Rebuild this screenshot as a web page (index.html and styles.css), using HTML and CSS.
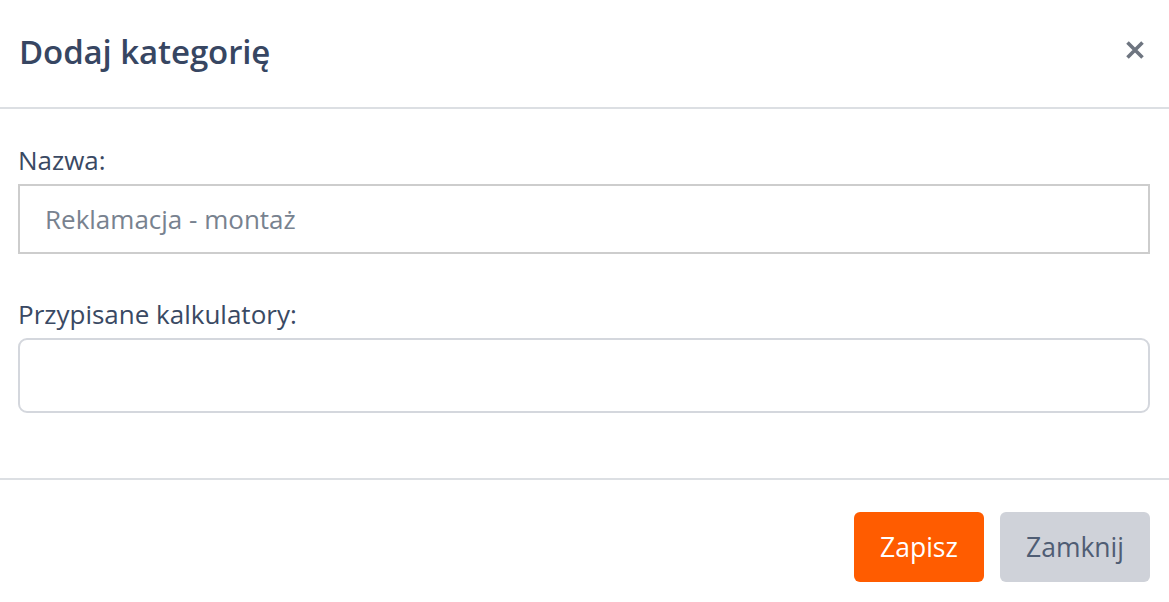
FILE: index.html
```html
<!DOCTYPE html>
<html lang="pl">
<head>
<meta charset="utf-8">
<link rel="stylesheet" href="styles.css">
</head>
<body>
<div class="modal">
  <div class="modal-header">
    <h5 class="modal-title">Dodaj kategorię</h5>
    <button class="close" aria-label="Zamknij">
      <svg width="20" height="20" viewBox="0 0 20 20"><path d="M2.5 2.5 L17.5 17.5 M17.5 2.5 L2.5 17.5" stroke="#6e7580" stroke-width="3.6" stroke-linecap="butt"/></svg>
    </button>
  </div>
  <div class="modal-body">
    <div class="form-group">
      <label class="label">Nazwa:</label>
      <input class="input" type="text" placeholder="Reklamacja - montaż">
    </div>
    <div class="form-group second">
      <label class="label">Przypisane kalkulatory:</label>
      <div class="select"></div>
    </div>
  </div>
  <div class="modal-footer">
    <button class="btn btn-primary">Zapisz</button>
    <button class="btn btn-secondary">Zamknij</button>
  </div>
</div>
</body>
</html>
```
FILE: styles.css
```css
* { box-sizing: border-box; }
html, body { margin: 0; padding: 0; background: #fff; }
body {
  font-family: "Open Sans", "Noto Sans", sans-serif;
  color: #3a4963;
  width: 1169px;
  height: 602px;
  overflow: hidden;
}
.modal { width: 1169px; }
.modal-header {
  height: 109px;
  padding: 0 24px 0 19px;
  display: flex;
  align-items: center;
  justify-content: space-between;
  border-bottom: 2px solid #dcdfe3;
}
.modal-title {
  margin: 0;
  font-size: 33px;
  font-weight: 600;
  color: #374662;
  letter-spacing: -0.1px;
  padding-bottom: 4px;
}
.close {
  background: none;
  border: 0;
  padding: 0;
  width: 20px;
  height: 20px;
  display: flex;
  margin-top: -8px;
}
.modal-body {
  padding: 34px 19px 65px 18px;
}
.form-group { display: flex; flex-direction: column; }
.form-group.second { margin-top: 43px; }
.label {
  font-size: 26px;
  line-height: 34px;
  margin-left: 0;
  margin-bottom: 7px;
  color: #3a4963;
}
.input {
  height: 70px;
  border: 2px solid #cdcdcd;
  border-radius: 0;
  padding: 0 25px;
  font-family: "Open Sans", "Noto Sans", sans-serif;
  font-size: 26px;
  outline: none;
}
.input::placeholder { color: #78828f; }
.select {
  height: 75px;
  border: 2px solid #d4d7dd;
  border-radius: 9px;
}
.modal-footer {
  border-top: 2px solid #dcdfe3;
  padding: 32px 19px 0 0;
  display: flex;
  justify-content: flex-end;
  gap: 16px;
}
.btn {
  height: 70px;
  border: 0;
  border-radius: 6px;
  font-family: "Open Sans", "Noto Sans", sans-serif;
  font-size: 26.5px;
  padding: 0;
}
.btn-primary { width: 130px; background: #ff5c00; color: #fff; }
.btn-secondary { width: 150px; background: #cfd2d9; color: #4f5d74; }
```
